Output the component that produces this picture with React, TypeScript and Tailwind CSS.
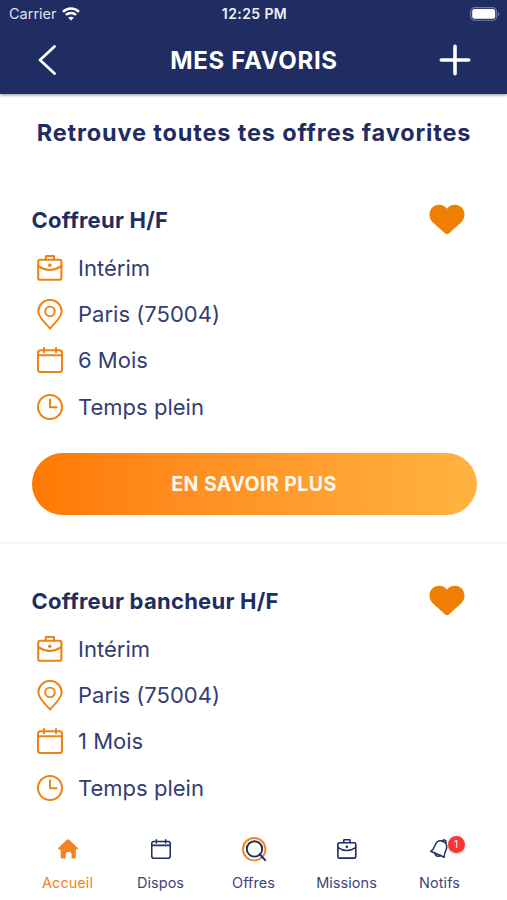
import React from "react";

type IconProps = { className?: string };

const stroke = {
  fill: "none",
  stroke: "currentColor",
  strokeLinecap: "round" as const,
  strokeLinejoin: "round" as const,
};

function BriefcaseIcon({ className }: IconProps) {
  return (
    <svg viewBox="0 0 26 26" className={className} {...stroke} strokeWidth={2.1}>
      <rect x="1.2" y="4.8" width="23.2" height="20" rx="1.8" />
      <path d="M8.8 4.6V1.8a.8.8 0 0 1 .8-.8h6.6a.8.8 0 0 1 .8.8v2.8" />
      <path d="M1.300 11.200Q12.800 18.700 24.300 11.200" />
      <circle cx="12.8" cy="10.2" r="1.7" fill="currentColor" stroke="none" />
    </svg>
  );
}

function PinIcon({ className }: IconProps) {
  return (
    <svg viewBox="0 0 26 32" className={className} {...stroke} strokeWidth={2}>
      <path d="M13 30.6C10 26.2 1 19.6 1 12.6a12 11.7 0 0 1 24 0c0 7-9 13.600-12 18Z" />
      <circle cx="13" cy="12.800" r="4.900" />
    </svg>
  );
}

function CalendarIcon({ className }: IconProps) {
  return (
    <svg viewBox="0 0 26 26" className={className} {...stroke} strokeWidth={2}>
      <rect x="1" y="3.200" width="24" height="21.800" rx="2.500" />
      <path d="M1 8.300h24M7 1v4.200M19 1v4.200" />
    </svg>
  );
}

function ClockIcon({ className }: IconProps) {
  return (
    <svg viewBox="0 0 26 26" className={className} {...stroke} strokeWidth={2}>
      <circle cx="13" cy="13" r="12" />
      <path d="M13 5.500v7.700h6.600" />
    </svg>
  );
}

function HeartIcon() {
  return (
    <svg viewBox="0 0 36 31" className="mb-[2px] h-[31px] w-[36px] text-[#ee7f03]" fill="currentColor">
      <path d="M18 30.300c-.7 0-1.300-.3-1.800-.8L4 18.600C1.800 16.500.5 13.700.5 10.600.5 5 4.700.8 10 .8c3.200 0 6.200 1.500 8 4 1.800-2.500 4.800-4 8-4 5.300 0 9.500 4.200 9.500 9.800 0 3.100-1.300 5.900-3.500 8L19.800 29.500c-.5.5-1.100.8-1.800.8Z" />
    </svg>
  );
}

function HomeIcon() {
  return (
    <svg viewBox="0 0 20 20" className="h-5 w-5" fill="currentColor">
      <path d="M8.900.7a1.600 1.600 0 0 1 2.200 0l8.200 7.900c1 1 .4 2-.7 2h-.8v7.200c0 1.100-.8 1.800-1.800 1.800h-2.500V15c0-1.300-.8-2-2-2h-1.800c-1.200 0-2 .7-2 2v4.600H4.600c-1.200 0-2-.7-2-1.800v-7.200h-1.200c-1.100 0-1.700-1-.7-2Z" />
    </svg>
  );
}

function SearchIcon() {
  return (
    <svg viewBox="0 0 25 25" className="ml-px h-[25px] w-[25px]" {...stroke}>
      <circle cx="12.200" cy="12.200" r="11.200" stroke="#f58220" strokeWidth={1.900} />
      <circle cx="12.500" cy="11.900" r="7.700" stroke="#1f2d62" strokeWidth={1.900} />
      <path d="m17.700 17.300 5.500 5.800" stroke="#1f2d62" strokeWidth={2} />
    </svg>
  );
}

function BellIcon() {
  return (
    <svg viewBox="0 0 22 22" className="h-[22px] w-[22px]" {...stroke} strokeWidth={1.500}>
      <path d="M1.800 13.200c3-1.400 3.300-3.800 4.500-6.500C7.800 3.500 10.700 2.200 13.500 3.200c3 1 4.800 3.900 4 7.200-.7 2.900-2.600 5.200-2.300 8.900Z" />
      <path d="M13.300 3a2 2 0 1 1 3.500 2" />
      <path d="M6.300 15.200c-.7 2.700 3.300 4.300 5.200 2" />
    </svg>
  );
}

function WifiIcon() {
  return (
    <svg viewBox="0 0 18 14" className="h-[14px] w-[18px]" fill="none" stroke="#fff" strokeWidth={2.500}>
      <path d="M1 4.800c4.500-4.300 11.500-4.300 16 0" />
      <path d="M3.900 7.900c2.900-2.700 7.300-2.700 10.200 0" />
      <path d="M9 13.600 6.200 10.800c1.600-1.500 4-1.500 5.600 0Z" fill="#fff" stroke="none" />
    </svg>
  );
}

function BatteryIcon() {
  return (
    <svg viewBox="0 0 30 14" className="h-[14px] w-[30px]">
      <rect x=".7" y=".6" width="26" height="12.600" rx="4" fill="none" stroke="#737da4" strokeWidth="1.100" />
      <rect x="2.200" y="2.100" width="23" height="9.600" rx="2.300" fill="#fff" />
      <path d="M28 5v4c1.700-.5 1.700-3.500 0-4Z" fill="#737da4" />
    </svg>
  );
}

function Detail({ icon, children }: { icon: React.ReactNode; children: React.ReactNode }) {
  return (
    <li className="flex h-[46.4px] items-center gap-[15px]">
      <span className="flex w-[26px] justify-center pb-px text-[#ee8212]">{icon}</span>
      <span className="text-[22px] tracking-[0.01px] text-[#323e72]">{children}</span>
    </li>
  );
}

function Offer({ title, duration, children }: { title: string; duration: string; children?: React.ReactNode }) {
  return (
    <article className="h-[381px] shrink-0 border-b-2 border-[#f6f6f7] pt-[32px] pr-[30.500px] pl-[31.500px]">
      <div className="flex h-[50px] items-center justify-between pr-[11.500px]">
        <h2 className="text-[22px] font-bold tracking-[0.260px]">{title}</h2>
        <HeartIcon />
      </div>
      <ul className="pl-[5.500px]">
        <Detail icon={<BriefcaseIcon className="h-[26px] w-[26px]" />}>Intérim</Detail>
        <Detail icon={<PinIcon className="h-[31px] w-[26px]" />}>Paris (75004)</Detail>
        <Detail icon={<CalendarIcon className="h-[26px] w-[26px]" />}>{duration}</Detail>
        <Detail icon={<ClockIcon className="h-[26px] w-[26px]" />}>Temps plein</Detail>
      </ul>
      {children}
    </article>
  );
}

function Tab({ label, icon, active = false }: { label: string; icon: React.ReactNode; active?: boolean }) {
  return (
    <a className={`flex flex-1 flex-col items-center ${active ? "text-[#f58220]" : "text-[#1f2d62]"}`}>
      <span className="flex h-[26px] items-center">{icon}</span>
      <span className={`mt-[11px] text-[14.500px] leading-5 tracking-[0.05px] ${active ? "" : "text-[#3c467a]"}`}>
        {label}
      </span>
    </a>
  );
}

export default function App() {
  return (
    <div className="flex h-[900px] w-[507px] flex-col overflow-hidden bg-white font-['Inter',sans-serif] text-[#1f2d62]">
      <header className="z-10 h-[94px] shrink-0 bg-[#1f2d62] text-white shadow-[0_1px_3px_rgba(0,0,0,0.45)]">
        <div className="grid h-[27px] grid-cols-3 items-center pr-[7px] pl-[9px]">
          <div className="flex items-center gap-[5px] text-[14.500px] text-[#dfe2ee]">
            Carrier
            <WifiIcon />
          </div>
          <div className="text-center text-[14px] font-semibold tracking-[0.4px] text-[#eef0f8]">12:25 PM</div>
          <div className="flex justify-end">
            <BatteryIcon />
          </div>
        </div>
        <div className="flex h-[66px] items-center pr-[36px] pl-[38px]">
          <svg viewBox="0 0 18 30" className="h-[30px] w-[18px]" {...stroke} strokeWidth={2.700}>
            <path d="M16.500 1.500 2 15l14.500 13.500" />
          </svg>
          <h1 className="flex-1 pt-px pl-[13px] text-center text-[24px] font-bold tracking-[0.680px]">MES FAVORIS</h1>
          <svg viewBox="0 0 32 32" className="h-8 w-8" {...stroke} strokeWidth={3.600}>
            <path d="M16 2.300v27.400M2.300 16h27.400" />
          </svg>
        </div>
      </header>
      <main className="flex min-h-0 flex-1 flex-col overflow-hidden">
        <div className="flex h-[69px] shrink-0 items-start justify-center pt-[21px]">
          <p className="pl-px text-[23.500px] leading-9 font-bold tracking-[0.840px] whitespace-nowrap">
            Retrouve toutes tes offres favorites
          </p>
        </div>
        <Offer title="Coffreur H/F" duration="6 Mois">
          <button className="mt-[22px] flex h-[62px] w-full items-center justify-center rounded-full bg-linear-to-r from-[#ff7900] to-[#ffb340] pt-[2px] text-[19.500px] font-bold tracking-[0.450px] text-[#fff8ec]">
            EN SAVOIR PLUS
          </button>
        </Offer>
        <Offer title="Coffreur bancheur H/F" duration="1 Mois" />
      </main>
      <nav className="flex h-[88px] shrink-0 bg-white px-[21px] pt-[24px]">
        <Tab active label="Accueil" icon={<HomeIcon />} />
        <Tab label="Dispos" icon={<CalendarIcon className="h-5 w-5" />} />
        <Tab label="Offres" icon={<SearchIcon />} />
        <Tab label="Missions" icon={<BriefcaseIcon className="h-5 w-5" />} />
        <Tab
          label="Notifs"
          icon={
            <span className="relative">
              <BellIcon />
              <span className="absolute -top-[2px] left-[19px] flex h-[17px] w-[17px] items-center justify-center rounded-full bg-[#f8352f] text-[10px] text-white shadow-[0_1px_3px_rgba(0,0,0,0.25)]">
                1
              </span>
            </span>
          }
        />
      </nav>
    </div>
  );
}
